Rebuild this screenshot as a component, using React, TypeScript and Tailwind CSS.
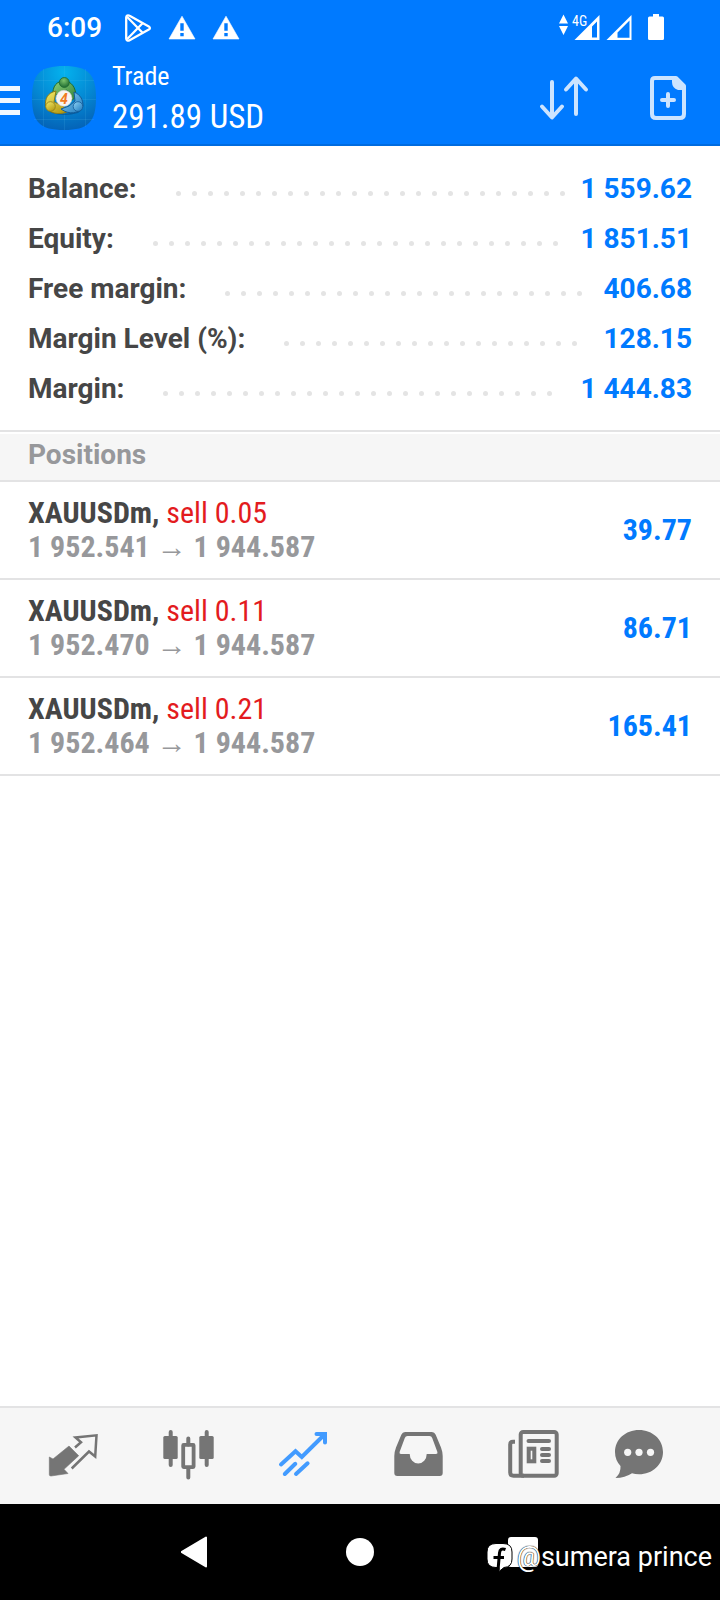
import type { ReactNode } from "react";

const summary = [
  { label: "Balance:", value: "1 559.62" },
  { label: "Equity:", value: "1 851.51" },
  { label: "Free margin:", value: "406.68" },
  { label: "Margin Level (%):", value: "128.15" },
  { label: "Margin:", value: "1 444.83" },
];

const positions = [
  { symbol: "XAUUSDm", side: "sell 0.05", open: "1 952.541", current: "1 944.587", profit: "39.77" },
  { symbol: "XAUUSDm", side: "sell 0.11", open: "1 952.470", current: "1 944.587", profit: "86.71" },
  { symbol: "XAUUSDm", side: "sell 0.21", open: "1 952.464", current: "1 944.587", profit: "165.41" },
];

const dots = Array.from({ length: 60 }, (_, i) => i);

function WarningIcon() {
  return (
    <svg className="h-7 w-7" viewBox="0 0 28 28" aria-hidden="true">
      <path d="M14 2.2 27 25H1Z" fill="#fff" stroke="#fff" strokeWidth="0.6" strokeLinejoin="round" />
      <path d="M12.3 9.2h3.4v7.6h-3.4zM12.3 19h3.4v3.2h-3.4z" fill="#007aff" />
    </svg>
  );
}

function PlayStoreIcon() {
  return (
    <svg className="h-7 w-7" viewBox="0 0 28 28" fill="none" stroke="#fff" strokeWidth="2.3" strokeLinejoin="round" aria-hidden="true">
      <path d="M2.2 3.6C2.2 1.6 3.8.7 5.6 1.8L24.8 12.4c1.5.9 1.5 2.3 0 3.2L5.6 26.2C3.8 27.3 2.2 26.4 2.2 24.4Z" />
      <path d="M3 2.8 18.8 19M3 25.2 18.8 9" />
    </svg>
  );
}

function NetworkIcons() {
  return (
    <svg className="h-8 w-[108px]" viewBox="0 0 108 32" aria-hidden="true">
      <path d="M7.5 2.5 12 11.5H3ZM7.5 23 3 14H12Z" fill="#fff" />
      <text x="16" y="13.5" fontSize="14" fill="#fff" className="font-['Roboto_Condensed',sans-serif]">4G</text>
      <path d="M43.5 3V28H18.5ZM41 9.5 36 14.5V25.5H41Z" fill="#fff" fillRule="evenodd" />
      <path d="M75.5 3V28H50.5ZM73.5 8.5 61.5 20.5V25.8H73.5Z" fill="#fff" fillRule="evenodd" />
      <path d="M97 2h6v2.5h3.5q1.5 0 1.5 1.5V26.5q0 1.5-1.5 1.5H93.5q-1.5 0-1.5-1.5V6q0-1.5 1.5-1.5H97Z" fill="#fff" />
    </svg>
  );
}

function AppLogo() {
  return (
    <svg className="h-16 w-16 shrink-0" viewBox="0 0 64 64" aria-hidden="true">
      <defs>
        <radialGradient id="logoBg" cx="0.5" cy="0.1" r="0.95">
          <stop offset="0" stopColor="#04b2ee" />
          <stop offset="0.55" stopColor="#0486d2" />
          <stop offset="1" stopColor="#045fb4" />
        </radialGradient>
        <linearGradient id="green" x1="0" y1="0" x2="1" y2="1">
          <stop offset="0" stopColor="#8fd07c" />
          <stop offset="1" stopColor="#2c7f35" />
        </linearGradient>
        <radialGradient id="greenHead" cx="0.45" cy="0.3" r="0.7">
          <stop offset="0" stopColor="#7cc46c" />
          <stop offset="1" stopColor="#1d6a30" />
        </radialGradient>
        <linearGradient id="yellow" x1="0" y1="0" x2="0.6" y2="1">
          <stop offset="0" stopColor="#f3ec6a" />
          <stop offset="1" stopColor="#b99f17" />
        </linearGradient>
        <linearGradient id="sky" x1="0" y1="0" x2="1" y2="1">
          <stop offset="0" stopColor="#8fd3f5" />
          <stop offset="1" stopColor="#1b78bd" />
        </linearGradient>
      </defs>
      <path d="M32 0C56 0 64 8 64 32S56 64 32 64 0 56 0 32 8 0 32 0Z" fill="url(#logoBg)" />
      <path d="M11.5 3v58M32.5 0v64M53.5 3v58M2 14.5h60M0 33.5h64M2 53.5h60" stroke="#5cc0ef" strokeOpacity="0.2" strokeWidth="0.8" />
      <path d="M15 44Q32 52 51 43L46 47Q32 51 20 47Z" fill="#053f7a" opacity="0.5" />
      <path d="M21 30C20 20 25 15 32 15S44 21 44 31L39 35 35 24 26 28Z" fill="url(#green)" stroke="#1d6a30" strokeWidth="1" />
      <path d="M24 25C15 27 13 33 13.5 40 17 48 27 49 35 46L31 40 22 36Z" fill="url(#yellow)" stroke="#8b7c16" strokeWidth="1" />
      <path d="M42 26C49 29 51 34 51 40 47 48 37 49 29 43L37 40 43 35Z" fill="url(#sky)" stroke="#145b98" strokeWidth="1" />
      <circle cx="32.3" cy="16.5" r="5" fill="url(#greenHead)" stroke="#1d6a30" strokeWidth="0.8" />
      <circle cx="18.5" cy="40.5" r="4.8" fill="url(#yellow)" stroke="#8b7c16" strokeWidth="0.8" />
      <circle cx="46" cy="40.5" r="4.8" fill="url(#sky)" stroke="#145b98" strokeWidth="0.8" />
      <circle cx="32" cy="32.3" r="8" fill="#f7f4f2" stroke="#d5d4d0" strokeWidth="0.6" />
      <text x="32" y="37.5" textAnchor="middle" fontSize="14" fill="#f07a22" className="font-bold italic font-['Roboto',sans-serif]">4</text>
    </svg>
  );
}

const tabs: { name: string; active?: boolean; icon: ReactNode }[] = [
  {
    name: "Quotes",
    icon: (
      <>
        <path d="M8.3 29 12 31 28 18 37.7 27.7 23 41.3 27 45.5 10 48Q8.3 48 8.3 46.5Z" fill="currentColor" stroke="currentColor" strokeWidth="0.6" strokeLinejoin="round" />
        <path d="M34 19.5 40 14.3 34.5 9.5 55.5 7.3 54.2 28.5 48 23.5 30.7 40.5" fill="none" stroke="currentColor" strokeWidth="2.5" />
      </>
    ),
  },
  {
    name: "Charts",
    icon: (
      <>
        <path d="M14.7 4v33M50.7 4v33M32.3 10.5v6M32.3 40v9.5" stroke="currentColor" strokeWidth="4" strokeLinecap="round" />
        <rect x="7.3" y="8" width="14.4" height="23" rx="1.5" fill="currentColor" />
        <rect x="43.3" y="8" width="14.4" height="23" rx="1.5" fill="currentColor" />
        <rect x="27.2" y="16.9" width="10.4" height="22.2" rx="0.5" fill="none" stroke="currentColor" strokeWidth="3.8" />
      </>
    ),
  },
  {
    name: "Trade",
    active: true,
    icon: (
      <path
        d="M10 36.5 24.5 23.3 30.8 29 53.5 6.5M45.5 6H54V14.5M13.8 46 24.3 35.8M25 46 36.6 35.3"
        fill="none"
        stroke="currentColor"
        strokeWidth="4"
        strokeLinecap="round"
      />
    ),
  },
  {
    name: "History",
    icon: (
      <path
        d="M20.5 4H46.5Q49.5 4 50.8 7L56 19.5Q57.7 24 57.7 28V45Q57.7 48 54.7 48H12.3Q9.3 48 9.3 45V28Q9.3 24 11 19.5L16.2 7Q17.5 4 20.5 4ZM22.5 8Q20.5 8 19.8 10L14.6 24Q14 26 16 26H24.7A8.5 9.5 0 0 0 41.7 26H51Q53 26 52.4 24L47.2 10Q46.5 8 44.5 8Z"
        fill="currentColor"
        fillRule="evenodd"
      />
    ),
  },
  {
    name: "News",
    icon: (
      <g fill="none" stroke="currentColor" strokeWidth="4">
        <rect x="20.7" y="4" width="36" height="43.7" rx="2.5" />
        <path d="M15 13.7H13Q10.2 13.7 10.2 16.5V44.5Q10.2 47.7 13.5 47.7H24" />
        <path d="M28.5 13H49M42 21H49M42 27H49M42 33H49" strokeLinecap="round" />
        <rect x="28.7" y="20.7" width="5.6" height="12.6" />
      </g>
    ),
  },
  {
    name: "Messages",
    icon: (
      <>
        <path d="M24 2C37.5 2 48 11.5 48 24S37.5 46.3 24 46.3Q20 46.3 17 45.3 10 50 .5 50 6 45 5.5 38 0 32 0 24C0 11.5 10.5 2 24 2Z" fill="currentColor" />
        <g fill="#f6f6f6">
          <circle cx="12.7" cy="24.3" r="3.6" />
          <circle cx="24" cy="24.3" r="3.6" />
          <circle cx="35.5" cy="24.3" r="3.6" />
        </g>
      </>
    ),
  },
];

export default function App() {
  return (
    <div className="flex min-h-screen flex-col bg-white font-['Roboto',sans-serif]">
      <header className="border-b-2 border-[#006ce0] bg-[#007aff] text-white">
        <div className="flex h-14 items-center pr-14 pl-[47px]">
          <span className="w-[77px] text-[28px] leading-8 font-medium">6:09</span>
          <div className="flex flex-1 items-center gap-4">
            <PlayStoreIcon />
            <WarningIcon />
            <WarningIcon />
          </div>
          <NetworkIcons />
        </div>
        <div className="flex h-[88px] items-center pr-8 pb-1">
          <button type="button" aria-label="Open menu" className="flex w-5 shrink-0 flex-col gap-[7px] pt-1">
            <span className="h-[5px] bg-[#f0f7ff]" />
            <span className="h-[5px] bg-[#f0f7ff]" />
            <span className="h-[5px] bg-[#f0f7ff]" />
          </button>
          <div className="ml-3 flex flex-1 items-center gap-4">
            <AppLogo />
            <div className="font-['Roboto_Condensed','Roboto',sans-serif]">
              <h1 className="text-[26px] leading-[38px]">Trade</h1>
              <p className="text-[33px] leading-[44px]">291.89 USD</p>
            </div>
          </div>
          <div className="flex items-center gap-[58px] text-[#cce4ff]">
            <button type="button" aria-label="Sort positions">
              <svg className="block h-12 w-[52px]" viewBox="0 0 52 48" fill="none" stroke="currentColor" strokeWidth="4" strokeLinecap="round" strokeLinejoin="round">
                <path d="M14 8V43M4 32.5 14 43.5 24 32.5M38 40V5M28 15.5 38 4.5 48 15.5" />
              </svg>
            </button>
            <button type="button" aria-label="New order">
              <svg className="block h-12 w-10" viewBox="0 0 40 48" fill="none" stroke="currentColor" strokeWidth="4" strokeLinejoin="round">
                <path d="M7 4H28L36 12V40Q36 44 32 44H8Q4 44 4 40V7Q4 4 7 4Z" />
                <path d="M24 3H29L37 11V16H30Q24 14 24 8Z" fill="currentColor" stroke="none" />
                <path d="M20 20V32M14 26H26" strokeLinecap="round" />
              </svg>
            </button>
          </div>
        </div>
      </header>

      <main className="flex-1">
        <dl className="border-b-2 border-[#e3e3e4] px-7 pt-[18px] pb-4 text-[28px] leading-[50px] font-bold">
          {summary.map((row) => (
            <div key={row.label} className="flex">
              <dt className="text-[#464646]">{row.label}</dt>
              <dd className="flex flex-1">
                <span className="mt-[27px] mr-[15px] ml-[39px] flex h-[5px] flex-1 flex-wrap gap-x-[11px] gap-y-2 overflow-hidden" aria-hidden="true">
                  {dots.map((dot) => (
                    <span key={dot} className="size-[5px] rounded-full bg-[#e4e4e4]" />
                  ))}
                </span>
                <span className="text-[#007aff]">{row.value}</span>
              </dd>
            </div>
          ))}
        </dl>

        <section>
          <h2 className="mt-0.5 border-b-2 border-[#e3e3e4] bg-[#f6f6f6] px-7 pt-px pb-[5px] text-[28px] leading-10 font-bold text-[#97989b]">
            Positions
          </h2>
          <ul className="font-['Roboto_Condensed','Roboto',sans-serif] text-[30px] leading-[34px]">
            {positions.map((p) => (
              <li key={p.open} className="flex items-center justify-between border-b-2 border-[#e3e3e4] px-7 py-3.5">
                <div>
                  <p className="font-bold text-[#464646]">
                    {p.symbol}, <span className="font-normal text-[#e31b1e]">{p.side}</span>
                  </p>
                  <p className="font-bold text-[#97989b]">
                    {p.open} → {p.current}
                  </p>
                </div>
                <span className="font-bold text-[#007aff]">{p.profit}</span>
              </li>
            ))}
          </ul>
        </section>
      </main>

      <nav aria-label="Sections" className="flex h-[98px] border-t-2 border-[#e3e3e4] bg-[#f6f6f6] px-4">
        {tabs.map((tab) => (
          <button
            key={tab.name}
            type="button"
            aria-label={tab.name}
            className={`flex flex-1 items-center justify-center ${tab.active ? "text-[#429bff]" : "text-[#757575]"}`}
          >
            <svg className="h-14 w-16" viewBox="0 0 64 56">{tab.icon}</svg>
          </button>
        ))}
      </nav>

      <footer className="relative flex h-24 justify-center bg-black text-white">
        <button type="button" aria-label="Back" className="flex w-[163px] items-center justify-center">
          <svg className="h-8 w-8" viewBox="0 0 32 32">
            <path d="M25 1.5V30.5L0.5 16Z" fill="#fff" stroke="#fff" strokeWidth="2" strokeLinejoin="round" />
          </svg>
        </button>
        <button type="button" aria-label="Home" className="flex w-[163px] items-center justify-center">
          <span className="size-7 rounded-full bg-white" />
        </button>
        <button type="button" aria-label="Recent apps" className="flex w-[163px] items-center justify-center">
          <span className="size-[30px] rounded-[3px] bg-white" />
        </button>
        <div className="absolute right-2 bottom-[27px] flex items-center gap-1">
          <svg className="h-8 w-[26px]" viewBox="0 0 26 32" aria-hidden="true">
            <path d="M9 2.5H16Q25 2.5 25 11V18Q25 26 17 26.5L12 30.5V26.5H9Q0 26.5 0 18V11Q0 2.5 9 2.5Z" fill="#fff" stroke="#000" strokeWidth="1" />
            <path d="M18.5 8.5Q13 6.5 12.5 12L11 29M6.5 16.5H17" fill="none" stroke="#000" strokeWidth="3" />
          </svg>
          <span className="text-[27px] leading-8 font-normal text-white [text-shadow:0_0_1px_#000,0_0_1px_#000]">@sumera prince</span>
        </div>
      </footer>
    </div>
  );
}
